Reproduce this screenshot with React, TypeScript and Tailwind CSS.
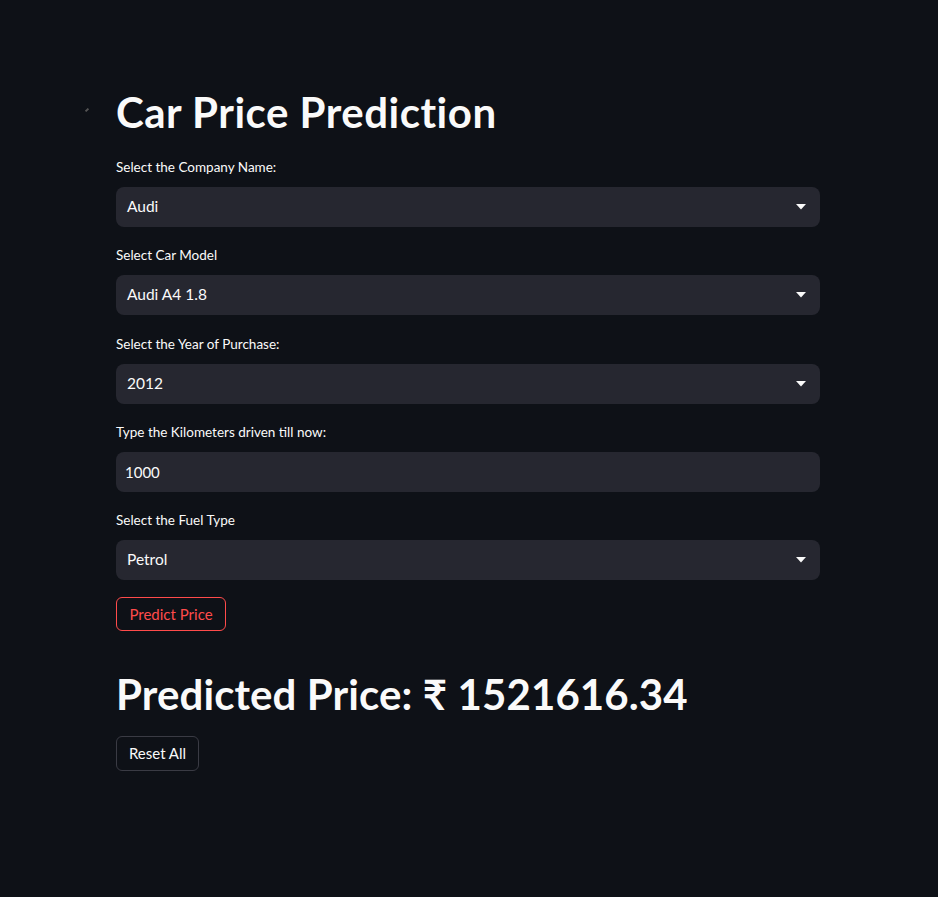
import React from "react";

const font = { fontFamily: '"Lato", "Noto Sans", sans-serif' };

function Caret() {
  return (
    <svg width="10" height="6" viewBox="0 0 10 6" className="shrink-0">
      <path d="M0 0 H10 L5 5.5 Z" fill="#fafafa" />
    </svg>
  );
}

function Label({ text }: { text: string }) {
  return <div className="h-[20px] text-[13.5px] leading-[20px] text-[#fafafa] mb-[10px]">{text}</div>;
}

function SelectBox({ value }: { value: string }) {
  return (
    <div className="h-[40px] rounded-[8px] bg-[#262730] flex items-center justify-between pl-[11px] pr-[14px]">
      <span className="text-[15.5px] text-[#fafafa]">{value}</span>
      <Caret />
    </div>
  );
}

function Field({ label, value, gap }: { label: string; value: string; gap: string }) {
  return (
    <div className={gap}>
      <Label text={label} />
      <SelectBox value={value} />
    </div>
  );
}

export default function App() {
  return (
    <div className="min-h-screen w-full bg-[#0e1117]" style={font}>
      <div className="relative ml-[116px] w-[704px] pt-[83px]">
        <div className="absolute left-[-30px] top-[108px] h-[4px] w-[2px] rotate-45 bg-[#555]" />
        <h1 className="h-[58px] text-[42px] font-bold leading-[58px] tracking-[0.5px] text-[#fafafa]">
          Car Price Prediction
        </h1>
        <div className="mt-[16px]">
          <Field label="Select the Company Name:" value="Audi" gap="mb-[18px]" />
          <Field label="Select Car Model" value="Audi A4 1.8" gap="mb-[19px]" />
          <Field label="Select the Year of Purchase:" value="2012" gap="mb-[18px]" />
          <div className="mb-[18px]">
            <Label text="Type the Kilometers driven till now:" />
            <div className="h-[40px] rounded-[8px] bg-[#262730] flex items-center pl-[9px]">
              <span className="text-[15px] text-[#fafafa]">1000</span>
            </div>
          </div>
          <Field label="Select the Fuel Type" value="Petrol" gap="" />
        </div>
        <button className="mt-[17px] h-[34px] w-[110px] rounded-[6px] border border-[#ff4b4b] bg-[#0e1117] text-[15px] text-[#ff4b4b]">
          Predict Price
        </button>
        <h2 className="mt-[38px] h-[50px] text-[42px] font-bold leading-[50px] tracking-[0.1px] text-[#fafafa]">
          Predicted Price: ₹ 1521616.34
        </h2>
        <button className="mt-[17px] h-[35px] w-[83px] rounded-[6px] border border-[#3a3b44] bg-[#0e1117] text-[15px] text-[#fafafa]">
          Reset All
        </button>
      </div>
    </div>
  );
}
